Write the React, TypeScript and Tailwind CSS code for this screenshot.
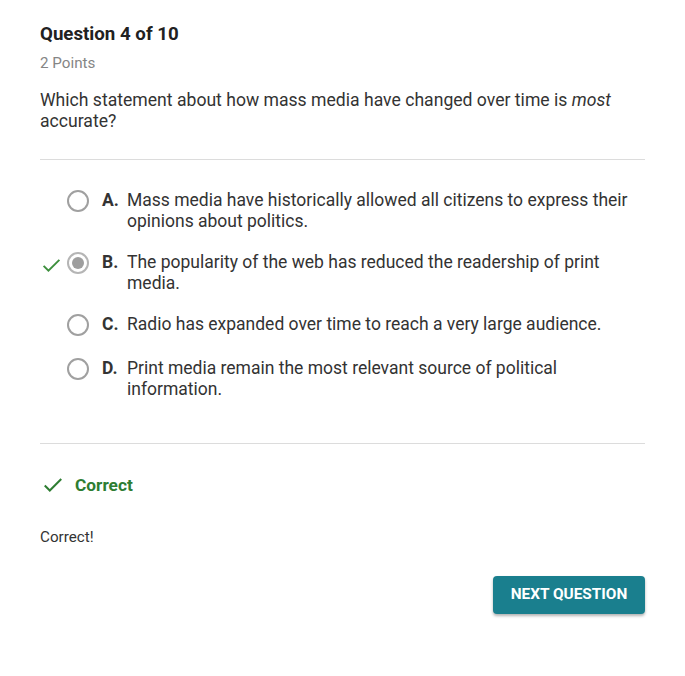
const options = [
  { letter: "A.", text: "Mass media have historically allowed all citizens to express their opinions about politics." },
  { letter: "B.", text: "The popularity of the web has reduced the readership of print media.", selected: true },
  { letter: "C.", text: "Radio has expanded over time to reach a very large audience." },
  { letter: "D.", text: "Print media remain the most relevant source of political information." },
];

const Check = ({ className }: { className?: string }) => (
  <svg viewBox="0 0 24 24" className={className} fill="none" stroke="currentColor" strokeWidth="2.2">
    <path d="M3 12.5l5.5 5.5L21 5.5" />
  </svg>
);

export default function App() {
  return (
    <div className="min-h-[676px] w-[685px] bg-white font-['Roboto',sans-serif] text-[#212121]">
      <div className="px-10 pt-[22px]">
        <h1 className="text-[18.7px] font-bold leading-6">Question 4 of 10</h1>
        <p className="mt-[7px] text-[15.2px] leading-5 text-[#858585]">2 Points</p>
        <p className="mt-[17px] text-[17.6px] leading-[21px] text-[#333]">
          Which statement about how mass media have changed over time is <i>most</i> accurate?
        </p>

        <div className="mt-[27px] border-t border-[#dcdcdc]" />

        <ul className="mt-[20px]">
          {options.map((o) => (
            <li key={o.letter} className="relative flex py-[10px] pl-[26px]">
              {o.selected && (
                <Check className="absolute left-[1px] top-[13px] h-[21px] w-[21px] text-[#3d8f3d]" />
              )}
              <div className="flex h-[21px] w-[24px] shrink-0 items-center justify-center">
                {o.selected ? (
                  <span className="flex h-[22px] w-[22px] items-center justify-center rounded-full border-2 border-[#b5b5b5]">
                    <span className="h-[12px] w-[12px] rounded-full bg-[#9e9e9e]" />
                  </span>
                ) : (
                  <span className="h-[22px] w-[22px] rounded-full border-2 border-[#a0a0a0]" />
                )}
              </div>
              <div className="ml-[12px] flex min-h-[24px] text-[17.5px] leading-[21px] text-[#333]">
                <span className="w-[25px] shrink-0 font-bold">{o.letter}</span>
                <span className="pr-2">{o.text}</span>
              </div>
            </li>
          ))}
        </ul>

        <div className="mt-[33px] border-t border-[#dcdcdc]" />

        <div className="mt-[30px] flex items-center">
          <Check className="ml-[2px] h-[22px] w-[22px] text-[#2e7d32]" />
          <span className="ml-[11px] text-[17.3px] font-bold leading-[22px] text-[#2e7d32]">Correct</span>
        </div>

        <p className="mt-[31px] text-[15.2px] leading-5 text-[#333]">Correct!</p>

        <div className="mt-[29px] flex justify-end">
          <button className="h-[38px] w-[152px] rounded-[4px] bg-[#1a7f8e] text-[15.4px] font-bold uppercase text-white shadow-[0_2px_3px_rgba(0,0,0,0.3)]">
            Next Question
          </button>
        </div>
      </div>
    </div>
  );
}
